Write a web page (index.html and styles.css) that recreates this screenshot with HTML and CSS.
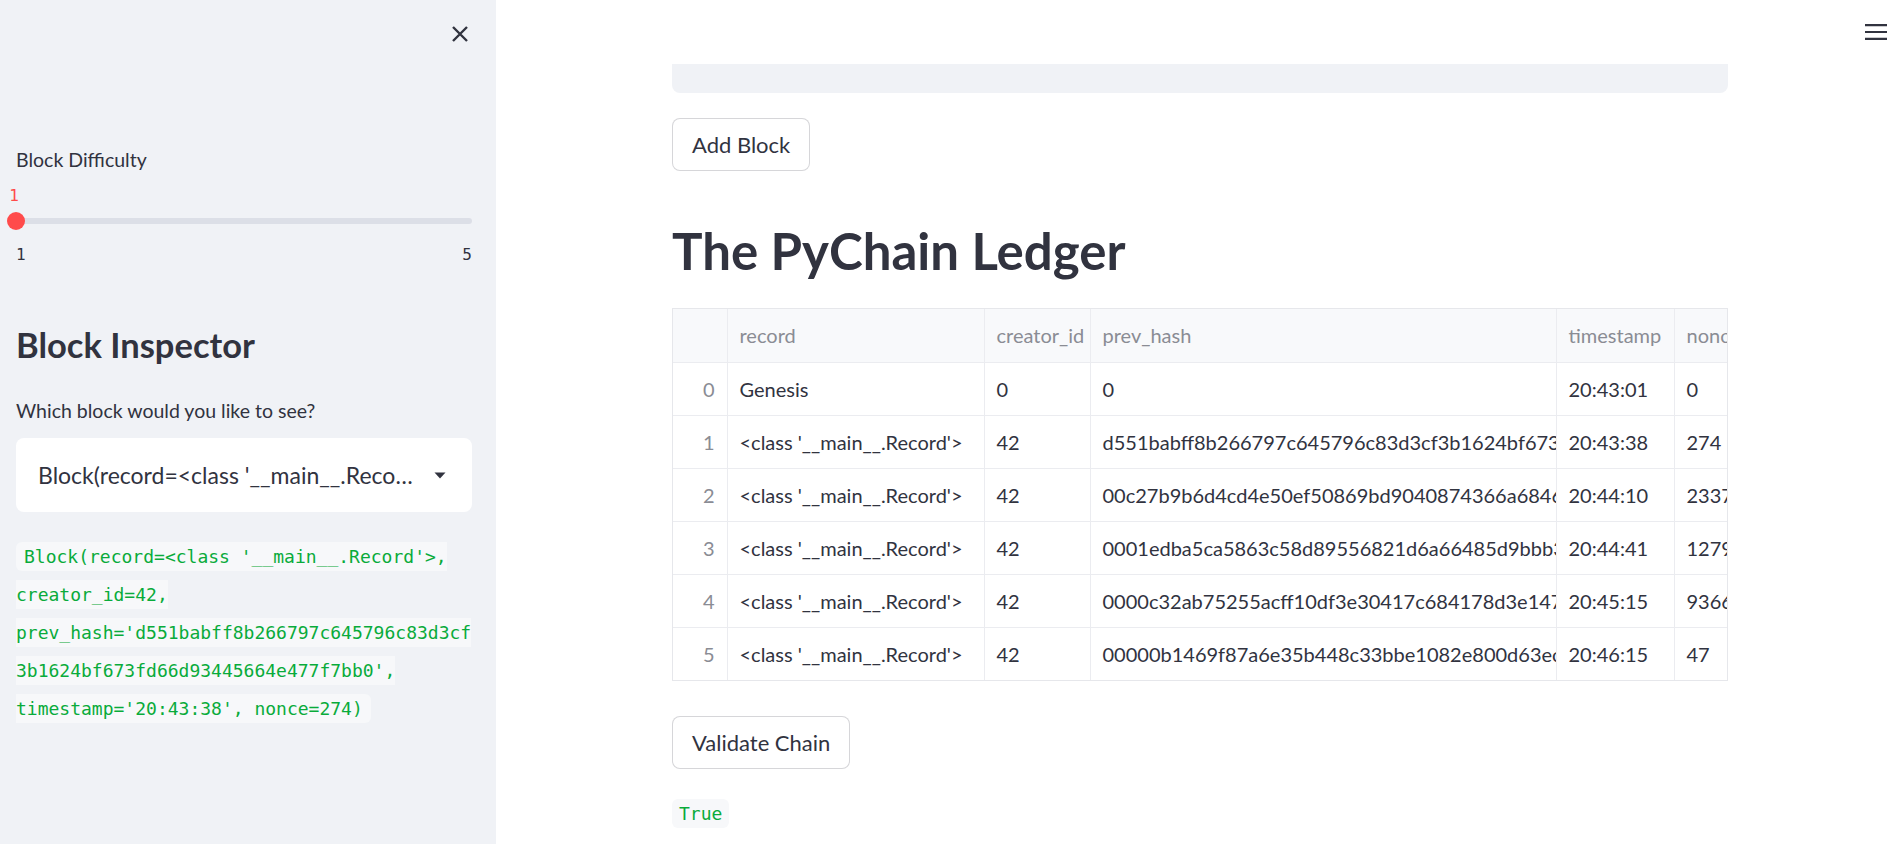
FILE: index.html
```html
<!DOCTYPE html>
<html lang="en">
<head>
    <meta charset="UTF-8">
    <meta name="viewport" content="width=device-width, initial-scale=1.0">
    <title>PyChain</title>
    <link rel="stylesheet" href="styles.css">
</head>
<body>
    <div class="app">
        <aside class="sidebar">
            <div class="sidebar-top">
                <button class="icon-btn" aria-label="Close sidebar">
                    <svg width="18" height="18" viewBox="0 0 18 18"><path d="M2 2L16 16M16 2L2 16" stroke="currentColor" stroke-width="2.4" fill="none"/></svg>
                </button>
            </div>

            <label class="widget-label difficulty-label">Block Difficulty</label>
            <div class="slider">
                <div class="slider-value">1</div>
                <div class="slider-rail">
                    <div class="slider-track"></div>
                    <div class="slider-thumb"></div>
                </div>
                <div class="slider-ticks"><span>1</span><span>5</span></div>
            </div>

            <h2>Block Inspector</h2>
            <label class="widget-label select-label">Which block would you like to see?</label>
            <div class="select">
                <span class="select-text">Block(record=&lt;class '__main__.Record'&gt;, creator_id=42, prev_hash='d551babff8b266797c645796c83d3cf3b1624bf673fd66d93445664e477f7bb0', timestamp='20:43:38', nonce=274)</span>
                <svg class="caret" width="12" height="7" viewBox="0 0 12 7"><path d="M0.5 0.5H11.5L6 6.5Z" fill="currentColor"/></svg>
            </div>

            <p class="block-output"><code>Block(record=&lt;class '__main__.Record'&gt;, creator_id=42, prev_hash='d551babff8b266797c645796c83d3cf3b1624bf673fd66d93445664e477f7bb0', timestamp='20:43:38', nonce=274)</code></p>
        </aside>

        <main class="main">
            <header class="topbar">
                <button class="icon-btn menu-btn" aria-label="Menu">
                    <svg width="22" height="16" viewBox="0 0 22 16"><path d="M0 1.2H22M0 8H22M0 14.8H22" stroke="currentColor" stroke-width="2.2" fill="none"/></svg>
                </button>
            </header>

            <div class="content">
                <div class="form-tail"></div>
                <button class="btn add-btn">Add Block</button>

                <h1>The PyChain Ledger</h1>

                <div class="frame">
                    <table>
                        <colgroup>
                            <col style="width:54px">
                            <col style="width:257px">
                            <col style="width:106px">
                            <col style="width:466px">
                            <col style="width:118px">
                            <col style="width:110px">
                        </colgroup>
                        <thead>
                            <tr>
                                <th class="idx"></th>
                                <th>record</th>
                                <th>creator_id</th>
                                <th>prev_hash</th>
                                <th>timestamp</th>
                                <th>nonce</th>
                            </tr>
                        </thead>
                        <tbody>
                            <tr>
                                <td class="idx">0</td>
                                <td>Genesis</td>
                                <td>0</td>
                                <td>0</td>
                                <td>20:43:01</td>
                                <td>0</td>
                            </tr>
                            <tr>
                                <td class="idx">1</td>
                                <td>&lt;class '__main__.Record'&gt;</td>
                                <td>42</td>
                                <td>d551babff8b266797c645796c83d3cf3b1624bf673fd66d93445664e477f7bb0</td>
                                <td>20:43:38</td>
                                <td>274</td>
                            </tr>
                            <tr>
                                <td class="idx">2</td>
                                <td>&lt;class '__main__.Record'&gt;</td>
                                <td>42</td>
                                <td>00c27b9b6d4cd4e50ef50869bd9040874366a6846db1e2f4a0c9d7b35e81c920</td>
                                <td>20:44:10</td>
                                <td>2337</td>
                            </tr>
                            <tr>
                                <td class="idx">3</td>
                                <td>&lt;class '__main__.Record'&gt;</td>
                                <td>42</td>
                                <td>0001edba5ca5863c58d89556821d6a66485d9bbb359f0e4c2a8d71b6e3f05a14</td>
                                <td>20:44:41</td>
                                <td>12794</td>
                            </tr>
                            <tr>
                                <td class="idx">4</td>
                                <td>&lt;class '__main__.Record'&gt;</td>
                                <td>42</td>
                                <td>0000c32ab75255acff10df3e30417c684178d3e147dbc85e20a6f9d4b17e3c02</td>
                                <td>20:45:15</td>
                                <td>93661</td>
                            </tr>
                            <tr>
                                <td class="idx">5</td>
                                <td>&lt;class '__main__.Record'&gt;</td>
                                <td>42</td>
                                <td>00000b1469f87a6e35b448c33bbe1082e800d63ec9bf2a71d04e5c38b96f1e27</td>
                                <td>20:46:15</td>
                                <td>47</td>
                            </tr>
                        </tbody>
                    </table>
                </div>

                <button class="btn validate-btn">Validate Chain</button>
                <p class="result"><code>True</code></p>
            </div>
        </main>
    </div>
</body>
</html>
```

FILE: styles.css
```css
body {
    margin: 0;
    font-family: Lato, "Noto Sans", sans-serif;
    color: #31333f;
    background: #fff;
    overflow: hidden;
}
.app {
    display: flex;
    height: 100vh;
}
.icon-btn {
    border: none;
    background: none;
    padding: 0;
    color: #31333f;
    display: flex;
    cursor: pointer;
}

/* sidebar */
.sidebar {
    flex: none;
    width: 496px;
    box-sizing: border-box;
    padding: 0 24px 0 16px;
    background-color: #f0f2f6;
}
.sidebar-top {
    height: 68px;
    display: flex;
    justify-content: flex-end;
    align-items: center;
    margin-right: 3px;
}
.widget-label {
    display: block;
    font-size: 19.5px;
    line-height: 24px;
}
.difficulty-label {
    margin-top: 80px;
}
.slider {
    position: relative;
}
.slider-value {
    width: 18px;
    margin: 12px 0 0 -11px;
    text-align: center;
    font-family: "DejaVu Sans Mono", monospace;
    font-size: 16px;
    line-height: 24px;
    color: #ff4b4b;
}
.slider-rail {
    position: relative;
    height: 26px;
    display: flex;
    align-items: center;
}
.slider-track {
    width: 100%;
    height: 6px;
    border-radius: 3px;
    background-color: #dcdfe7;
}
.slider-thumb {
    position: absolute;
    left: -9px;
    top: 4px;
    width: 18px;
    height: 18px;
    border-radius: 50%;
    background-color: #ff4b4b;
}
.slider-ticks {
    display: flex;
    justify-content: space-between;
    margin-top: 9px;
    font-family: "DejaVu Sans Mono", monospace;
    font-size: 16px;
    line-height: 24px;
}
h2 {
    margin: 57px 0 0;
    font-size: 34.5px;
    font-weight: 700;
    line-height: 41px;
}
.select-label {
    margin-top: 34px;
}
.select {
    margin-top: 15px;
    height: 74px;
    display: flex;
    align-items: center;
    gap: 20px;
    padding: 0 26px 0 22px;
    background-color: #fff;
    border-radius: 8px;
}
.select-text {
    flex: 1;
    min-width: 0;
    white-space: nowrap;
    overflow: hidden;
    text-overflow: ellipsis;
    font-size: 23px;
}
.caret {
    flex: none;
}
.block-output {
    margin: 26px 0 0;
    font-family: "DejaVu Sans Mono", monospace;
    font-size: 18px;
    line-height: 38px;
    overflow-wrap: break-word;
}
code {
    font-family: "DejaVu Sans Mono", monospace;
    color: #09ab3b;
    background-color: #f7f8fa;
    padding: 4px 8px;
    border-radius: 6px;
}

/* main column */
.main {
    flex: 1;
    min-width: 0;
    display: flex;
    flex-direction: column;
    padding-left: 4px;
}
.topbar {
    flex: none;
    height: 64px;
    display: flex;
    justify-content: flex-end;
    align-items: center;
    padding-right: 13px;
}
.content {
    width: 1056px;
    margin: 0 auto;
}
.form-tail {
    height: 29px;
    background-color: #f0f2f6;
    border-radius: 0 0 8px 8px;
}
.btn {
    display: block;
    height: 53px;
    padding: 0 19px;
    border: 1px solid rgba(49, 51, 63, 0.2);
    border-radius: 8px;
    background-color: #fff;
    font-family: inherit;
    font-size: 22px;
    color: #31333f;
    cursor: pointer;
}
.add-btn {
    margin-top: 25px;
}
h1 {
    margin: 49px 0 0;
    font-size: 51px;
    font-weight: 700;
    line-height: 61px;
}
.frame {
    margin-top: 27px;
    border: 1px solid #e6e7eb;
    overflow: hidden;
}
table {
    border-collapse: collapse;
    table-layout: fixed;
    width: 1111px;
}
th, td {
    padding: 0 12px;
    border-right: 1px solid #ebecf0;
    border-bottom: 1px solid #ebecf0;
    white-space: nowrap;
    overflow: hidden;
    text-align: left;
    font-size: 20px;
}
thead tr {
    height: 53px;
}
tbody tr {
    height: 53px;
}
tbody tr:last-child td {
    border-bottom: none;
}
th {
    font-weight: 400;
    color: #8a8c94;
    background-color: #f8f9fb;
}
.idx {
    text-align: right;
    color: #8a8c94;
}
.validate-btn {
    margin-top: 35px;
}
.result {
    margin: 30px 0 0;
}
.result code {
    display: inline-block;
    padding: 0 7px;
    line-height: 29px;
    font-size: 18px;
}
```
